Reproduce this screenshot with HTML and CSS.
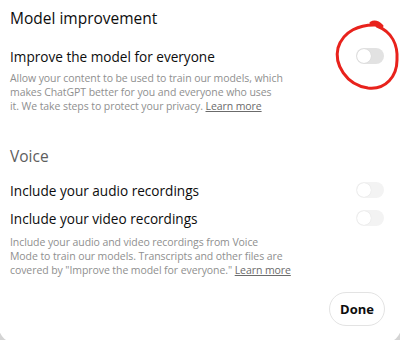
FILE: index.html
```html
<!DOCTYPE html>
<html lang="en">
<head>
    <meta charset="UTF-8">
    <meta name="viewport" content="width=device-width, initial-scale=1.0">
    <title>Data controls</title>
    <link rel="stylesheet" href="styles.css">
</head>
<body>

<div class="dialog">
    <section class="group">
        <h2 class="group-title">Model improvement</h2>
        <div class="setting">
            <div class="setting-row">
                <span class="setting-label">Improve the model for everyone</span>
                <span class="toggle"></span>
            </div>
            <p class="setting-desc">Allow your content to be used to train our models, which<br>makes ChatGPT better for you and everyone who uses<br>it. We take steps to protect your privacy. <a href="#">Learn more</a></p>
        </div>
    </section>

    <section class="group group-voice">
        <h2 class="group-title muted">Voice</h2>
        <div class="setting-row">
            <span class="setting-label">Include your audio recordings</span>
            <span class="toggle faint"></span>
        </div>
        <div class="setting-row">
            <span class="setting-label">Include your video recordings</span>
            <span class="toggle faint"></span>
        </div>
        <p class="setting-desc">Include your audio and video recordings from Voice<br>Mode to train our models. Transcripts and other files are<br>covered by "Improve the model for everyone." <a href="#">Learn more</a></p>
    </section>

    <div class="footer">
        <button class="done-btn">Done</button>
    </div>

    <!-- hand-drawn marker around the first toggle -->
    <svg class="marker" width="70" height="76" viewBox="0 0 70 76">
        <path d="M41 5 C45 3 49 5 52 8 M47 7 C30 6 13 13 8 30 C4 46 16 67 38 70 C56 72 67 58 67 42 C68 27 62 14 47 8" fill="none" stroke="#e8221c" stroke-width="3" stroke-linecap="round"/>
    </svg>
</div>

</body>
</html>
```

FILE: styles.css
```css
body {
    font-family: "Open Sans", "Noto Sans", sans-serif;
    margin: 0;
    padding: 0;
    background-color: #d4d4d4;
    height: 340px;
    overflow: hidden;
}
.dialog {
    position: relative;
    background-color: white;
    margin: 0 -2px;
    height: 344px;
    padding: 6px 18px 0 12px;
    box-sizing: border-box;
    border-radius: 0 0 20px 20px;
    color: #0d0d0d;
}
.group-title {
    font-size: 15.5px;
    font-weight: normal;
    line-height: 24px;
    margin: 0 0 12px;
}
.muted {
    color: #5d5d5d;
}
.setting-row {
    display: flex;
    justify-content: space-between;
    align-items: center;
    height: 28px;
}
.setting-label {
    font-size: 13.6px;
}
.setting-desc {
    font-size: 10.5px;
    line-height: 14px;
    letter-spacing: -0.08px;
    color: #8f8f8f;
    margin: 1px 0 0;
    white-space: nowrap;
}
.setting-desc a {
    color: #6b6b6b;
    text-decoration: underline;
}
.group-voice {
    margin-top: 31px;
}
.group-voice .group-title {
    margin-bottom: 8px;
}
.group-voice .setting-desc {
    margin-top: 3px;
}
.toggle {
    position: relative;
    width: 28px;
    height: 16px;
    border-radius: 8px;
    background-color: #e2e2e2;
}
.toggle::after {
    content: "";
    position: absolute;
    left: 1px;
    top: 1px;
    width: 14px;
    height: 14px;
    border-radius: 50%;
    background-color: white;
    box-shadow: 0 0 1px rgba(0, 0, 0, 0.15);
}
.toggle.faint {
    background-color: #f3f3f3;
}
.footer {
    display: flex;
    justify-content: flex-end;
    margin-top: 15px;
}
.done-btn {
    font-family: inherit;
    font-size: 13px;
    font-weight: bold;
    color: #0d0d0d;
    background-color: white;
    border: 1px solid #e3e3e3;
    border-radius: 17px;
    height: 34px;
    padding: 0 10px;
    margin-right: -1px;
}
.marker {
    position: absolute;
    left: 332px;
    top: 18px;
}
```
